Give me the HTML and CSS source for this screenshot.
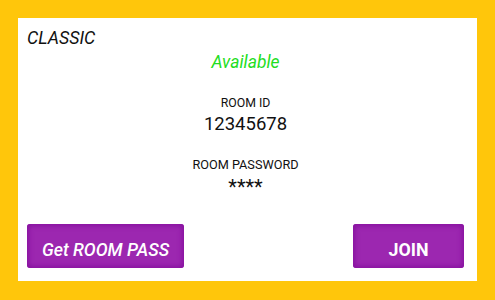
FILE: index.html
```html
<!DOCTYPE html>
<html>
<head>
<meta charset="utf-8">
<link rel="stylesheet" href="styles.css">
</head>
<body>
<div class="frame">
  <div class="panel">
    <div class="mode">CLASSIC</div>
    <div class="status">Available</div>
    <div class="label id-label">ROOM ID</div>
    <div class="value id-value">12345678</div>
    <div class="label pw-label">ROOM PASSWORD</div>
    <div class="value pw-value">****</div>
    <div class="actions">
      <button class="btn btn-pass">Get ROOM PASS</button>
      <button class="btn btn-join">JOIN</button>
    </div>
  </div>
</div>
</body>
</html>
```
FILE: styles.css
```css
html, body {
  margin: 0;
  padding: 0;
}
body {
  width: 495px;
  height: 300px;
  background: #ffc60b;
  font-family: Roboto, "Liberation Sans", sans-serif;
}
.frame {
  box-sizing: border-box;
  width: 495px;
  height: 300px;
  padding: 18px 18px 19px 18px;
}
.panel {
  box-sizing: border-box;
  width: 459px;
  height: 263px;
  background: #ffffff;
  display: flex;
  flex-direction: column;
  padding: 8px 13px 0 9px;
  color: #111;
}
.mode {
  font-size: 17.8px;
  font-style: italic;
  line-height: 24px;
}
.status {
  font-size: 17.5px;
  font-style: italic;
  color: #22dd22;
  text-align: center;
  line-height: 24px;
}
.label {
  line-height: 16px;
  text-align: center;
}
.id-label {
  font-size: 12.3px;
  margin-top: 21px;
}
.value {
  text-align: center;
}
.id-value {
  font-size: 18.5px;
  line-height: 24px;
  margin-top: 1px;
}
.pw-label {
  font-size: 12.7px;
  margin-top: 21px;
}
.pw-value {
  font-size: 20px;
  line-height: 22px;
  margin-top: 3px;
}
.actions {
  display: flex;
  justify-content: space-between;
  margin-top: 26px;
}
.btn {
  box-sizing: border-box;
  height: 44px;
  border: none;
  border-radius: 3px;
  background: #9c27b0;
  box-shadow: inset 0 0 5px 2px #8812a0;
  color: #ffffff;
  font-family: Roboto, "Liberation Sans", sans-serif;
  font-size: 17.8px;
  font-weight: 500;
  padding: 6px 0 0 0;
}
.btn-pass {
  width: 157px;
  font-style: italic;
}
.btn-join {
  width: 111px;
  font-weight: 700;
}
```
